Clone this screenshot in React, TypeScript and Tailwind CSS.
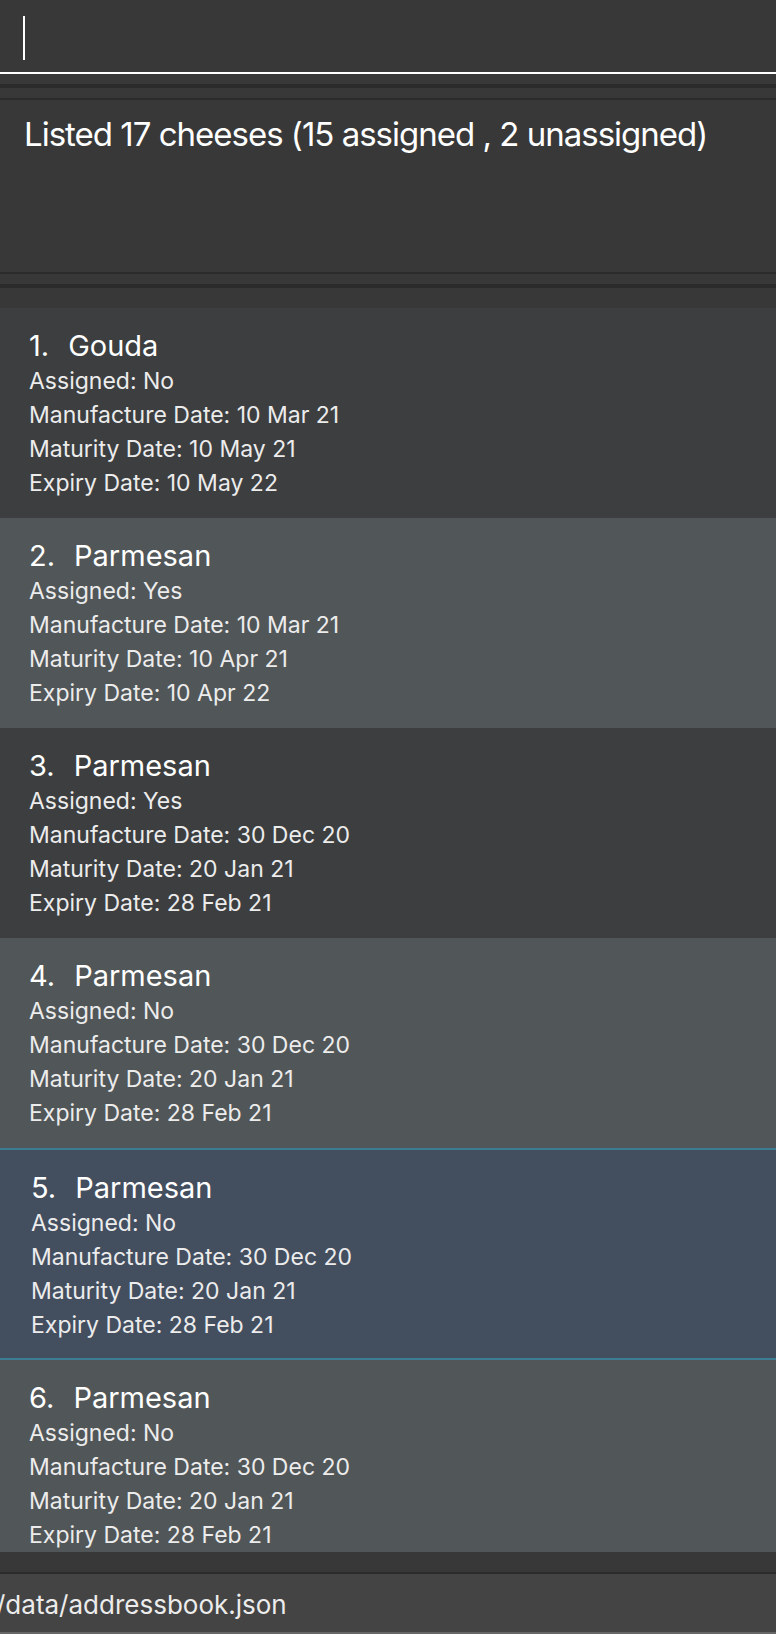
import React from "react";

type Cheese = {
  name: string;
  assigned: string;
  manufacture: string;
  maturity: string;
  expiry: string;
};

const cheeses: Cheese[] = [
  { name: "Gouda", assigned: "No", manufacture: "10 Mar 21", maturity: "10 May 21", expiry: "10 May 22" },
  { name: "Parmesan", assigned: "Yes", manufacture: "10 Mar 21", maturity: "10 Apr 21", expiry: "10 Apr 22" },
  { name: "Parmesan", assigned: "Yes", manufacture: "30 Dec 20", maturity: "20 Jan 21", expiry: "28 Feb 21" },
  { name: "Parmesan", assigned: "No", manufacture: "30 Dec 20", maturity: "20 Jan 21", expiry: "28 Feb 21" },
  { name: "Parmesan", assigned: "No", manufacture: "30 Dec 20", maturity: "20 Jan 21", expiry: "28 Feb 21" },
  { name: "Parmesan", assigned: "No", manufacture: "30 Dec 20", maturity: "20 Jan 21", expiry: "28 Feb 21" },
];

function Card({ c, i }: { c: Cheese; i: number }) {
  const selected = i === 4;
  const even = i % 2 === 1;
  const base = selected
    ? "bg-[#434e5f] border-y-2 border-[#3d7d93] pl-[31px] pt-[20px] pb-[16px]"
    : even
    ? "bg-[#515658] pl-[29px] pt-[20px] pb-[18px]"
    : "bg-[#3c3e40] pl-[29px] pt-[20px] pb-[18px]";
  return (
    <div className={`${base} shrink-0`}>
      <div className="flex text-[29px] leading-[36px] text-white">
        <span>{i + 1}.</span>
        <span className="ml-[19px]">{c.name}</span>
      </div>
      <div className="text-[23px] leading-[34px] text-[#ececec]">
        <div>Assigned: {c.assigned}</div>
        <div>Manufacture Date: {c.manufacture}</div>
        <div>Maturity Date: {c.maturity}</div>
        <div>Expiry Date: {c.expiry}</div>
      </div>
    </div>
  );
}

export default function App() {
  return (
    <div className="w-[776px] h-[1634px] bg-[#383838] flex flex-col overflow-hidden font-['Inter','Roboto',sans-serif]">
      <div className="h-[74px] shrink-0 border-b-2 border-white pl-[23px] pt-[16px]">
        <div className="w-[2px] h-[44px] bg-white" />
      </div>
      <div className="mt-[10px] shrink-0 border-y-4 border-[#2b2b2b] py-[10px]">
        <div className="h-[176px] border-y-2 border-[#2b2b2b] pl-[24px] pt-[14px]">
          <p className="text-[33px] leading-[40px] tracking-[-1px] text-white">
            Listed 17 cheeses (15 assigned , 2 unassigned)
          </p>
        </div>
      </div>
      <div className="mt-[20px] h-[1244px] shrink-0 flex flex-col overflow-hidden">
        {cheeses.map((c, i) => (
          <Card key={i} c={c} i={i} />
        ))}
      </div>
      <div className="mt-[20px] shrink-0 h-[62px] border-t-2 border-[#2b2b2b] border-b-2 border-b-[#666666] bg-[#444444] overflow-hidden">
        <div className="ml-[-4px] text-[26px] leading-[62px] text-[#ececec] whitespace-nowrap">
          /data/addressbook.json
        </div>
      </div>
    </div>
  );
}
